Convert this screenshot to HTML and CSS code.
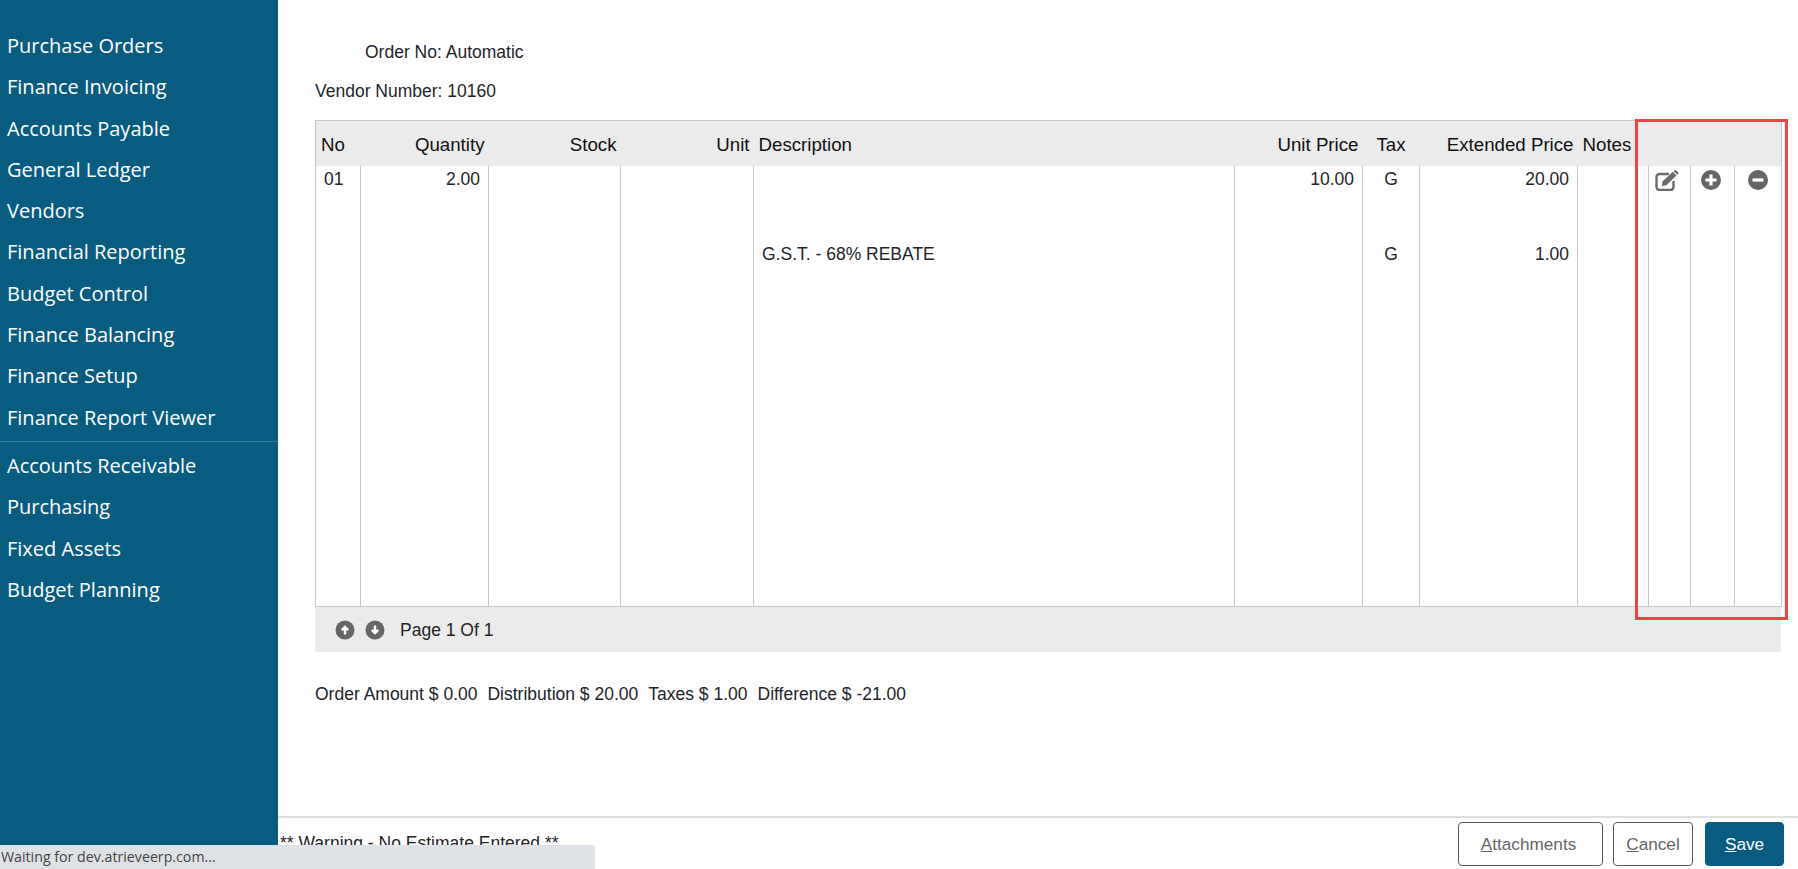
FILE: index.html
```html
<!DOCTYPE html>
<html lang="en">
<head>
  <meta charset="UTF-8">
  <title>Order Entry</title>
  <link rel="stylesheet" href="styles.css">
</head>
<body>
  <!-- sidebar -->
  <div class="sidebar">
    <nav class="nav-group">
      <div class="nav-item">Purchase Orders</div>
      <div class="nav-item">Finance Invoicing</div>
      <div class="nav-item">Accounts Payable</div>
      <div class="nav-item">General Ledger</div>
      <div class="nav-item">Vendors</div>
      <div class="nav-item">Financial Reporting</div>
      <div class="nav-item">Budget Control</div>
      <div class="nav-item">Finance Balancing</div>
      <div class="nav-item">Finance Setup</div>
      <div class="nav-item">Finance Report Viewer</div>
    </nav>
    <nav class="nav-group nav-group-second">
      <div class="nav-item">Accounts Receivable</div>
      <div class="nav-item">Purchasing</div>
      <div class="nav-item">Fixed Assets</div>
      <div class="nav-item">Budget Planning</div>
    </nav>
  </div>

  <!-- main content -->
  <div class="main-content">
    <div class="content">
      <div class="order-no">Order No: Automatic</div>
      <div class="vendor-no">Vendor Number: 10160</div>

      <div class="grid-wrap">
        <table class="lines">
          <colgroup>
            <col class="c-no"><col class="c-qty"><col class="c-stock"><col class="c-unit"><col class="c-desc">
            <col class="c-price"><col class="c-tax"><col class="c-ext"><col class="c-notes">
            <col class="c-act"><col class="c-act2"><col class="c-act3">
          </colgroup>
          <thead>
            <tr>
              <th>No</th>
              <th class="right">Quantity</th>
              <th class="right">Stock</th>
              <th class="right">Unit</th>
              <th>Description</th>
              <th class="right">Unit Price</th>
              <th class="center">Tax</th>
              <th class="right">Extended Price</th>
              <th>Notes</th>
              <th></th><th></th><th></th>
            </tr>
          </thead>
          <tbody>
            <tr class="row-first">
              <td class="no">01</td>
              <td class="right">2.00</td>
              <td></td><td></td><td></td>
              <td class="right">10.00</td>
              <td class="center">G</td>
              <td class="right">20.00</td>
              <td></td>
              <td class="center">
                <svg class="icon icon-edit" width="24" height="21" viewBox="0 0 24 21"><path d="M14 4H4.500A3 3 0 0 0 1.500 7v10a3 3 0 0 0 3 3H15.500a3 3 0 0 0 3-3v-6" fill="none" stroke="#6c6c6c" stroke-width="2.400"/><path d="M7.500 11.500 17.800 1.800l3.700 3.600-10.200 9.900-4.600.8z" fill="#6c6c6c"/><path d="M19.200.6a1.500 1.500 0 0 1 2.100 0l1.600 1.500a1.500 1.500 0 0 1 0 2.100l-.6.600-3.700-3.600z" fill="#6c6c6c"/></svg>
              </td>
              <td class="center">
                <svg class="icon icon-plus" width="20" height="20" viewBox="0 0 20 20"><circle cx="10" cy="10" r="10" fill="#666"/><path d="M10 4.500v11M4.500 10h11" stroke="#fff" stroke-width="3.200"/></svg>
              </td>
              <td class="center">
                <svg class="icon" width="20" height="20" viewBox="0 0 20 20"><circle cx="10" cy="10" r="10" fill="#666"/><path d="M4.500 10h11" stroke="#fff" stroke-width="3.200"/></svg>
              </td>
            </tr>
            <tr class="row-rest">
              <td></td><td></td><td></td><td></td>
              <td class="desc">G.S.T. - 68% REBATE</td>
              <td></td>
              <td class="center">G</td>
              <td class="right">1.00</td>
              <td></td><td></td><td></td><td></td>
            </tr>
          </tbody>
        </table>
        <div class="pager">
          <svg class="page-icon" width="20" height="20" viewBox="0 0 20 20"><circle cx="10" cy="10" r="9.500" fill="#666"/><path d="M10 14.500V7.500M6.800 10.200 10 7l3.200 3.200" fill="none" stroke="#fff" stroke-width="2.400"/></svg>
          <svg class="page-icon" width="20" height="20" viewBox="0 0 20 20"><circle cx="10" cy="10" r="9.500" fill="#666"/><path d="M10 5.500v7M6.800 9.800 10 13l3.200-3.200" fill="none" stroke="#fff" stroke-width="2.400"/></svg>
          <span class="page-text">Page 1 Of 1</span>
        </div>
        <div class="highlight"></div>
      </div>

      <div class="totals">
        <span>Order Amount $ 0.00</span>
        <span>Distribution $ 20.00</span>
        <span>Taxes $ 1.00</span>
        <span>Difference $ -21.00</span>
      </div>
    </div>

    <!-- footer -->
    <div class="footer">
      <div class="warning">** Warning - No Estimate Entered **</div>
      <div class="actions">
        <button class="btn btn-attach"><u>A</u>ttachments</button>
        <button class="btn btn-cancel"><u>C</u>ancel</button>
        <button class="btn btn-save"><u>S</u>ave</button>
      </div>
    </div>
  </div>

  <div class="status-bubble">Waiting for dev.atrieveerp.com...</div>
</body>
</html>
```

FILE: styles.css
```css
* {
  margin: 0;
  padding: 0;
  box-sizing: border-box;
}

body {
  font-family: "Liberation Sans", Arial, sans-serif;
  font-size: 17.500px;
  color: #212529;
  background: #fff;
  height: 100vh;
  display: flex;
  overflow: hidden;
}

/* sidebar */
.sidebar {
  width: 278px;
  flex-shrink: 0;
  background: #085c7f;
  color: #fff;
  font-family: "Open Sans", sans-serif;
  font-size: 20px;
  padding-top: 25px;
}

.nav-group {
  padding-bottom: 3px;
}

.nav-group-second {
  border-top: 1px solid #2f7d9c;
  padding-top: 3px;
}

.nav-item {
  height: 41.300px;
  line-height: 41.300px;
  padding-left: 7px;
  white-space: nowrap;
}

/* main content */
.main-content {
  flex: 1;
  display: flex;
  flex-direction: column;
  min-width: 0;
}

.content {
  flex: 1;
  padding: 42px 0 0 37px;
}

.order-no {
  height: 20px;
  line-height: 20px;
  padding-left: 50px;
}

.vendor-no {
  height: 20px;
  line-height: 20px;
  margin-top: 19px;
}

.grid-wrap {
  position: relative;
  width: 1466px;
  margin-top: 19px;
}

.lines {
  width: 1466px;
  height: 487px;
  table-layout: fixed;
  border-collapse: collapse;
  border: 1px solid #c8c8c8;
}

.c-no { width: 45px; }
.c-qty { width: 128px; }
.c-stock { width: 132px; }
.c-unit { width: 133px; }
.c-desc { width: 481px; }
.c-price { width: 128px; }
.c-tax { width: 57px; }
.c-ext { width: 158px; }
.c-notes { width: 71px; }
.c-act { width: 42px; }
.c-act2 { width: 44px; }
.c-act3 { width: 47px; }

.lines th {
  height: 45px;
  background: #ebebeb;
  font-weight: normal;
  font-size: 18.700px;
  color: #111;
  text-align: left;
  padding: 3px 5px 0;
  white-space: nowrap;
}

.lines th.right {
  padding-right: 4px;
}

.lines td {
  border-left: 1px solid #c8c8c8;
  vertical-align: top;
  padding: 4px 8px 0;
  line-height: 19px;
}

.lines td:first-child {
  border-left: none;
}

.lines .right {
  text-align: right;
}

.lines .center {
  text-align: center;
}

.row-first td {
  height: 75px;
}

.icon {
  display: block;
  margin: 0 auto;
}

.icon-edit {
  position: relative;
  left: -3px;
}

.icon-plus {
  position: relative;
  left: -2px;
}

.pager {
  height: 45px;
  background: #ebebeb;
  display: flex;
  align-items: center;
  padding-left: 20px;
}

.page-icon {
  margin-right: 10px;
}

.page-text {
  margin: 2px 0 0 5px;
}

.highlight {
  position: absolute;
  left: 1320px;
  top: -1px;
  width: 153px;
  height: 501px;
  border: 3px solid #ee4444;
}

.totals {
  display: flex;
  gap: 10px;
  margin-top: 32px;
  line-height: 20px;
}

/* footer */
.footer {
  height: 53px;
  border-top: 2px solid #e0e0e0;
  display: flex;
  justify-content: space-between;
  padding-right: 14px;
}

.warning {
  padding: 15px 0 0 2px;
  line-height: 20px;
}

.actions {
  display: flex;
  align-items: flex-start;
  gap: 10px;
  padding-top: 4px;
}

.btn {
  height: 44px;
  font-family: "Liberation Sans", Arial, sans-serif;
  font-size: 17.200px;
  color: #666;
  background: #fff;
  border: 1px solid #555;
  border-radius: 4px;
}

.btn-attach {
  width: 145px;
  padding-right: 4px;
}

.btn-cancel { width: 80px; }

.btn-save {
  width: 79px;
  margin-left: 2px;
  color: #fff;
  background: #085c7f;
  border-color: #085c7f;
}

.status-bubble {
  position: absolute;
  left: 0;
  bottom: 0;
  width: 595px;
  height: 24px;
  line-height: 24px;
  padding-left: 1px;
  background: #dee1e6;
  color: #444;
  font-family: "Open Sans", sans-serif;
  font-size: 14.200px;
  border-top-right-radius: 4px;
}
```
